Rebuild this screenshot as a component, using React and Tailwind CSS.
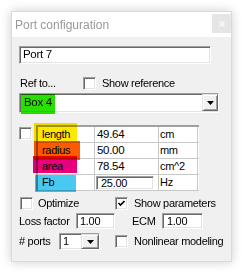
import React from 'react'

// Fenêtre "Port configuration" (style Windows classique, fenêtre inactive)

const sunken =
  'border border-t-[#a0a0a0] border-l-[#a0a0a0] border-b-white border-r-white shadow-[inset_1px_1px_0_#696969,inset_-1px_-1px_0_#e3e3e3]'
const raised =
  'border border-t-[#e3e3e3] border-l-[#e3e3e3] border-b-[#696969] border-r-[#696969] shadow-[inset_1px_1px_0_#fff,inset_-1px_-1px_0_#a0a0a0] bg-[#f0f0f0]'

function CheckBox({ checked }) {
  return (
    <div className={`flex h-[13px] w-[13px] shrink-0 items-center justify-center bg-white ${sunken}`}>
      {checked && (
        <svg width="9" height="9" viewBox="0 0 9 9">
          <polyline points="1.5,4 3.5,6 7.5,2" fill="none" stroke="#000" strokeWidth="1.7" />
        </svg>
      )}
    </div>
  )
}

function DropButton({ className }) {
  return (
    <div className={`flex shrink-0 items-center justify-center ${raised} ${className}`}>
      <svg width="7" height="4" viewBox="0 0 7 4">
        <polygon points="0,0 7,0 3.5,4" fill="#000" />
      </svg>
    </div>
  )
}

const rows = [
  { label: 'length', value: '49.64', unit: 'cm' },
  { label: 'radius', value: '50.00', unit: 'mm' },
  { label: 'area', value: '78.54', unit: 'cm^2' },
  { label: 'Fb', value: '25.00', unit: 'Hz', edit: true },
]

function ParamGrid() {
  return (
    <div className="relative w-[163px] border-l-2 border-t-2 border-l-[#a0a0a0] border-t-[#a0a0a0] bg-white">
      {rows.map((r) => (
        <div key={r.label} className="flex h-[16px] border-b border-[#c8c8c8]">
          <div className="flex w-[56px] items-center pl-[4px]">{r.label}</div>
          <div className="flex w-[64px] items-center border-l border-[#c8c8c8]">
            {r.edit ? (
              <div className={`ml-[1px] flex h-[14px] w-[58px] items-center self-end bg-white pl-[4px] ${sunken}`}>
                {r.value}
              </div>
            ) : (
              <span className="pl-[2px] text-[11.5px]">{r.value}</span>
            )}
          </div>
          <div className="flex w-[40px] items-center border-l border-r border-[#c8c8c8] pl-[1px]">{r.unit}</div>
        </div>
      ))}
      {/* surlignages de couleur posés sur les libellés */}
      <div className="absolute left-[-4px] top-[-4px] h-[19px] w-[43px] bg-[#ffe800] mix-blend-multiply" />
      <div className="absolute left-[-4px] top-[14px] h-[19px] w-[46px] bg-[#ff5a00] mix-blend-multiply" />
      <div className="absolute left-[-5px] top-[29px] h-[17px] w-[44px] bg-[#e8007e] mix-blend-multiply" />
      <div className="absolute left-[-3px] top-[48px] h-[17px] w-[41px] bg-[#48c9f2] mix-blend-multiply" />
    </div>
  )
}

export default function App() {
  return (
    <div className="h-[280px] w-[252px] bg-white pl-[11px] pt-[11px] font-['Liberation_Sans',Arial,sans-serif] text-[11px] leading-none text-black">
      <div className="flex h-[251px] w-[221px] flex-col border border-[#dadada] bg-[#f0f0f0] shadow-[0_0_10px_rgba(0,0,0,0.2)]">
        <div className="flex h-[25px] shrink-0 justify-between bg-white pl-[3px]">
          <span className="self-center text-[12px] text-[#999]">Port configuration</span>
          <div className="mt-[2px] flex h-[19px] w-[19px] items-center justify-center bg-[#e5e5e5]">
            <svg width="6" height="6" viewBox="0 0 6 6">
              <path d="M0.5 0.5 L5.5 5.5 M5.5 0.5 L0.5 5.5" stroke="#fafafa" strokeWidth="1.4" />
            </svg>
          </div>
        </div>

        <div className="flex flex-col pl-[7px] tracking-[-0.3px]">
          <div className={`mt-[9px] flex h-[18px] w-[192px] items-center bg-white pl-[3px] text-[11.5px] ${sunken}`}>
            Port 7
          </div>

          <div className="mt-[13px] flex h-[13px] items-center">
            <span className="ml-[1px] w-[63px]">Ref to...</span>
            <CheckBox />
            <span className="ml-[6px]">Show reference</span>
          </div>

          <div className={`relative mt-[3px] flex h-[20px] w-[200px] justify-between bg-white ${sunken}`}>
            <span className="self-center pl-[4px] text-[11.5px]">Box 4</span>
            <div className="absolute left-[1px] top-0 h-[20px] w-[34px] bg-[#28e000] mix-blend-multiply" />
            <DropButton className="h-[17px] w-[16px]" />
          </div>

          <div className="mt-[12px] flex">
            <div className="mt-[2px]">
              <CheckBox />
            </div>
            <div className="ml-[4px]">
              <ParamGrid />
            </div>
          </div>

          <div className="mt-[6px] flex h-[13px] items-center">
            <div className="flex w-[96px] items-center pl-[1px]">
              <CheckBox />
              <span className="ml-[5px]">Optimize</span>
            </div>
            <CheckBox checked />
            <span className="ml-[6px]">Show parameters</span>
          </div>

          <div className="mt-[3px] flex h-[16px] items-center">
            <span className="w-[57px]">Loss factor</span>
            <div className={`flex h-[16px] w-[39px] items-center bg-white pl-[3px] ${sunken}`}>1.00</div>
            <span className="ml-[17px] w-[30px]">ECM</span>
            <div className={`flex h-[16px] w-[41px] items-center bg-white pl-[4px] ${sunken}`}>1.00</div>
          </div>

          <div className="mt-[4px] flex h-[17px] items-center">
            <span className="w-[40px]">#&nbsp;ports</span>
            <div className={`flex h-[17px] w-[41px] items-center justify-between bg-white pl-[3px] ${sunken}`}>
              <span>1</span>
              <DropButton className="h-[15px] w-[18px]" />
            </div>
            <div className="ml-[15px]">
              <CheckBox />
            </div>
            <span className="ml-[6px]">Nonlinear modeling</span>
          </div>
        </div>
      </div>
    </div>
  )
}
